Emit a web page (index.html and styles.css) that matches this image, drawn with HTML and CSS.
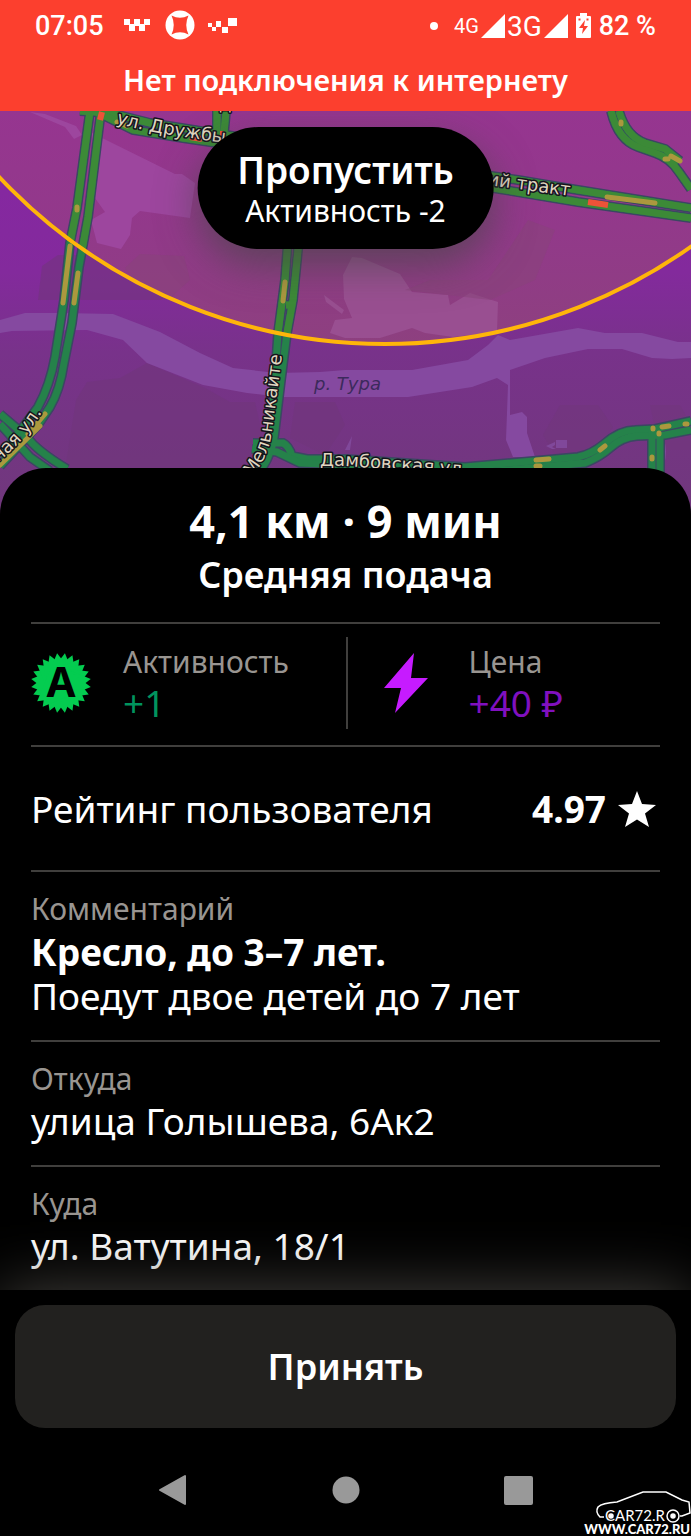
FILE: index.html
```html
<!DOCTYPE html>
<html lang="ru">
<head>
<meta charset="utf-8">
<meta name="viewport" content="width=device-width, initial-scale=1">
<title>Новый заказ</title>
<link rel="stylesheet" href="styles.css">
</head>
<body>
<header class="top">
  <div class="status">
    <span class="status-time">07:05</span>
    <svg class="status-apps" width="114" height="32" viewBox="0 0 114 32" fill="#fff" aria-hidden="true">
      <path d="M0 9h6v5h4v-5h6v5h4v-5h6v6h-5v6h-6v-5h-4v5h-6v-6h-5z"/>
      <circle cx="56" cy="15" r="14.500"/>
      <path d="M47.500 5.500q8.500 4.500 17 0-4.500 9.500 0 19-8.500-4.500-17 0 4.500-9.500 0-19z" fill="#fc3f2e"/>
      <path d="M84 13h4v4h-4zM88 17h4v4h-4zM92 11h5v6h-5zM98 17h6v6h-6zM104 8h9v8h-9z"/>
    </svg>
    <span class="status-dot"></span>
    <div class="status-net">
      <span class="net-small">4G</span>
      <svg width="24" height="24" viewBox="0 0 24 24" fill="#fff" aria-hidden="true"><path d="M0 24 24 0v24z"/></svg>
      <span class="net-large">3G</span>
      <svg width="24" height="24" viewBox="0 0 24 24" fill="#fff" aria-hidden="true"><path d="M0 24 24 0v24z"/></svg>
    </div>
    <svg width="15" height="26" viewBox="0 0 15 26" aria-hidden="true">
      <path d="M4 0h7v3h3q1 0 1 1v20q0 1-1 1H1q-1 0-1-1V4q0-1 1-1h3z" fill="#fff"/>
      <path d="M9 7 3 15h4l-1 6 6-8H8zM2.500 5.500h2v2h-2zM10.500 5.500h2v2h-2z" fill="#fc3f2e"/>
    </svg>
    <span class="status-battery">82 %</span>
  </div>
  <p class="offline" role="alert">Нет подключения к интернету</p>
</header>

<main class="order">
  <section class="map">
    <svg class="map-canvas" viewBox="0 111 691 403" preserveAspectRatio="xMidYMin slice" role="img" aria-label="Карта">
      <defs>
        <linearGradient id="land" x1="0" y1="0" x2="0" y2="1">
          <stop offset="0" stop-color="#8726a4"/><stop offset=".4" stop-color="#832a9c"/>
          <stop offset=".6" stop-color="#78328a"/><stop offset="1" stop-color="#70387c"/>
        </linearGradient>
        <linearGradient id="zone" gradientUnits="userSpaceOnUse" x1="0" y1="111" x2="0" y2="344">
          <stop offset="0" stop-color="#963590"/><stop offset=".5" stop-color="#92398a"/><stop offset="1" stop-color="#8d407f"/>
        </linearGradient>
        <clipPath id="zone-clip"><circle cx="385" cy="-185" r="529"/></clipPath>
        <g id="lanes">
          <path d="M90 111 77 208 70 243 64 300 55 357Q50 385 38 407L20 431 0 456"/>
          <path d="M101 111 88 217 79 267 72 323 64 363Q60 390 50 407L38 425 0 466"/>
          <path d="M0 414 27 437Q36 450 67 469M0 424 30 457 50 471"/>
          <path d="M80 111 110 113 150 123 213 133 350 154 518 180 578 190 691 208"/>
          <path d="M97 112 133 130 183 138 217 143 350 165 493 188 578 202 691 218"/>
          <path d="M217 111v22M226 111l-2 22"/>
          <path d="M611 111Q618 140 638 147L655 153Q670 158 679 172L691 189"/>
          <path d="M619 111Q626 136 645 143L665 149 680 161"/>
          <path d="M288 240 285 280 278 333 272 423Q270 445 252 470"/>
          <path d="M299 240 293 300 287 333 281 380 275 430Q274 450 261 470M293 305h-7"/>
          <path d="M253 443H283Q289 446 292 456L307 459H346L465 467 578 457Q592 454 604 444 620 430 635 430L655 429 691 421"/>
          <path d="M252 449 277 452 300 463 346 465 465 474 585 463Q600 457 610 448 622 437 637 436L665 435 691 430"/>
          <path d="M652 430V474M660 434V474"/>
        </g>
      </defs>
      <rect y="111" width="691" height="403" fill="url(#land)"/>
      <g fill="#71367b" opacity=".55">
        <path d="M87 382 120 378 147 363 205 388 230 402H255L270 470H65L76 400z"/>
        <path d="M295 402 335 402 345 425 325 455 290 438zM560 405h38l15 22-20 28h-38l-12-20zM650 405h30l11 20v25h-32z"/>
        <path d="M42 266 58 255H150L190 285 160 300H38z"/>
      </g>
      <path fill="#8549a0" d="M0 320 25 313 63 313 113 314 160 332 200 353 233 368 277 373 320 372 345 370 412 370 468 360 488 345 498 335 510 340 578 328 605 333 642 333 678 342 691 342V358L672 359 652 358 622 349 588 349 545 358 510 370 510 415 522 412 527 417 527 433 535 457 513 457 506 440 508 385 497 378 472 387 408 397 283 397 247 393 203 385 147 363 123 340 87 330 12 331 0 333z"/>
      <path fill="#80489a" d="M546 446 555 442v3l-3 2 4 2h-4zM556 440h11v8h-11zM345 450l7-14-2 14zM664 440q4 10 0 26z"/>
      <circle cx="385" cy="-185" r="529" fill="url(#zone)"/>
      <g fill="#9d469e" clip-path="url(#zone-clip)">
        <path d="M92 133 175 174 182 174 195 183 190 218 140 211 132 218 130 235 121 249 97 243 91 220 105 212 95 198z"/>
        <path d="M30 112 45 114 76 126 82 135 74 139 65 127z"/>
        <g fill="#994f91">
          <path d="M343 275 352 257 362 258 400 274 412 292 448 295 450 305 470 293 498 302 497 332 453 337 425 333 412 328 380 338 345 338 330 333 335 320 352 318 344 299z"/>
          <path d="M324 295 344 310 342 314 326 302z"/>
        </g>
        <path fill="#87437a" opacity=".5" d="M125 268 140 254 184 256 190 280 168 300 140 290zM405 290l25-10h58l40-60 27 10-20 50-45 20z"/>
      </g>
      <use href="#lanes" fill="none" stroke="#3c4663" stroke-width="10"/>
      <use href="#lanes" fill="none" stroke="#25824a" stroke-width="7"/>
      <g clip-path="url(#zone-clip)"><use href="#lanes" fill="none" stroke="#3c8a37" stroke-width="7"/></g>
      <g fill="none" stroke="#ab983e" stroke-width="5" stroke-linecap="round">
        <path d="M77 207v3M70 246 63 303M78 273 74 303M285 282 283 301M45 414 28 434M40 426 0 465M117 122 127 126M607 197 655 203M621 122v2M671 156 680 161M665 159h3M536 460 549 459M536 466h4M600 450 605 446M662 427 669 426M685 424h2M653 429v-1M659 433v1M652 457v2"/>
      </g>
      <path d="M102 112 100 120M190 137 202 139M588 202 608 205M220 134h4" fill="none" stroke="#ee5238" stroke-width="6"/>
      <circle cx="385" cy="-185" r="529" fill="none" stroke="#ffb50a" stroke-width="4"/>
      <defs>
        <path id="p-druzhby" d="M116 123Q150 134 250 146"/>
        <path id="p-trakt" d="M487 185 600 200"/>
        <path id="p-melnikayte" d="M252 477Q269 456 272 432L284 340"/>
        <path id="p-left" d="M-10 468Q36 436 60 376"/>
        <path id="p-dambovskaya" d="M320 466 345 466Q400 470 500 478"/>
      </defs>
      <g class="street">
        <text><textPath href="#p-druzhby">ул. Дружбы</textPath></text>
        <text><textPath href="#p-trakt">ий тракт</textPath></text>
        <text><textPath href="#p-melnikayte">Мельникайте</textPath></text>
        <text><textPath href="#p-left">зная ул.</textPath></text>
        <text><textPath href="#p-dambovskaya">Дамбовская ул.</textPath></text>
        <text x="219" y="110">д</text>
      </g>
      <text class="river" x="314" y="390">р. Тура</text>
    </svg>
    <button class="skip" type="button">
      <span class="skip-title">Пропустить</span>
      <span class="skip-note">Активность -2</span>
    </button>
  </section>

  <section class="sheet">
    <div class="summary">
      <h1 class="summary-title">4,1 км · 9 мин</h1>
      <p class="summary-sub">Средняя подача</p>
    </div>
    <div class="bonuses">
      <div class="bonus">
        <svg width="60" height="60" viewBox="0 0 60 60" aria-hidden="true">
          <g fill="#04cc50" transform="rotate(7.5 30 30)">
            <path id="spikes" d="M30 0 55.980 45H4.020z"/>
            <use href="#spikes" transform="rotate(15 30 30)"/>
            <use href="#spikes" transform="rotate(30 30 30)"/>
            <use href="#spikes" transform="rotate(45 30 30)"/>
            <use href="#spikes" transform="rotate(60 30 30)"/>
            <use href="#spikes" transform="rotate(75 30 30)"/>
            <use href="#spikes" transform="rotate(90 30 30)"/>
            <use href="#spikes" transform="rotate(105 30 30)"/>
          </g>
          <text class="badge-letter" x="30" y="44">A</text>
        </svg>
        <div>
          <p class="label">Активность</p>
          <p class="value value-green">+1</p>
        </div>
      </div>
      <div class="bonus bonus-price">
        <svg width="60" height="60" viewBox="0 0 60 60" aria-hidden="true"><path d="M37 0 7 35h17l-6 25 33-35H34z" fill="#c61bff"/></svg>
        <div>
          <p class="label">Цена</p>
          <p class="value value-violet">+40 ₽</p>
        </div>
      </div>
    </div>
    <div class="rating">
      <p class="value">Рейтинг пользователя</p>
      <p class="rating-score">4.97
        <svg width="38" height="36" viewBox="0 0 38 36" fill="#fff" aria-hidden="true"><path d="M19 0 24 13 38 14 27 22.500 31 36 19 28.500 7 36 11 22.500 0 14 14 13z"/></svg>
      </p>
    </div>
    <div class="field">
      <p class="label">Комментарий</p>
      <p class="value value-bold">Кресло, до 3–7 лет.</p>
      <p class="value">Поедут двое детей до 7 лет</p>
    </div>
    <div class="field">
      <p class="label">Откуда</p>
      <p class="value">улица Голышева, 6Ак2</p>
    </div>
    <div class="field">
      <p class="label">Куда</p>
      <p class="value">ул. Ватутина, 18/1</p>
    </div>
  </section>
</main>

<footer class="footer">
  <button class="accept" type="button">Принять</button>
  <nav class="system-nav">
    <button type="button" aria-label="Назад"><svg width="30" height="32" viewBox="0 0 30 32" fill="#999" stroke="#999" stroke-width="2" stroke-linejoin="round"><path d="M2 16 27 2v28z"/></svg></button>
    <button type="button" aria-label="Домой"><svg width="28" height="28" viewBox="0 0 28 28" fill="#999"><circle cx="14" cy="14" r="13.500"/></svg></button>
    <button type="button" aria-label="Недавние"><svg width="29" height="29" viewBox="0 0 29 29" fill="#999"><rect width="29" height="29" rx="2"/></svg></button>
  </nav>
  <a class="watermark" href="#">
    <svg width="112" height="46" viewBox="0 0 112 46" fill="none" stroke="#fff" stroke-width="1.500" role="img" aria-label="CAR72.RU">
      <path d="M25 27H21Q16 22 19 17 23 13 38 12L64 2H87L103 10 110 12 111 23 103 26H101"/>
      <text class="mark-thin" x="26" y="31">CAR72.R</text>
      <circle cx="94" cy="26" r="6"/>
      <circle cx="32" cy="26" r="2" fill="#fff"/><circle cx="94" cy="26" r="2" fill="#fff"/>
      <text class="mark-bold" x="111" y="44">WWW.CAR72.RU</text>
    </svg>
  </a>
</footer>
</body>
</html>
```

FILE: styles.css
```css
* { box-sizing: border-box; }

body {
  margin: 0;
  min-height: 100vh;
  display: flex;
  flex-direction: column;
  background: #000;
  color: #fff;
  font-family: "Noto Sans", "Open Sans", sans-serif;
}

p, h1 { margin: 0; }

button {
  border: 0;
  padding: 0;
  background: none;
  color: inherit;
  font: inherit;
  cursor: pointer;
}

svg { display: block; flex: none; }

/* Status bar and connection banner */
.top {
  background: #fc3f2e;
  padding: 10px 35px 11px;
}

.status {
  display: flex;
  align-items: center;
  height: 32px;
  font-family: Roboto, sans-serif;
  font-size: 27px;
  font-weight: 500;
}

.status-apps { margin-left: 20px; }

.status-dot {
  width: 8px;
  height: 8px;
  margin-left: auto;
  margin-right: 16px;
  border-radius: 50%;
  background: #fff;
}

.status-net {
  display: flex;
  align-items: center;
  gap: 2px;
  margin-right: 8px;
  font-weight: 400;
}

.net-small { font-size: 20px; }
.net-large { font-size: 28px; }
.status-battery { margin-left: 8px; }

.offline {
  margin-top: 18px;
  line-height: 40px;
  font-size: 29px;
  font-weight: 600;
  text-align: center;
}

/* Map */
.order {
  flex: 1;
  display: flex;
  flex-direction: column;
}

.map {
  position: relative;
  flex: 1;
  min-height: 403px;
  overflow: hidden;
}

.map-canvas {
  position: absolute;
  inset: 0;
  width: 100%;
  height: 100%;
}

.street {
  font: 18px "DejaVu Sans", sans-serif;
  fill: #e0d6c0;
  stroke: #14141c;
  stroke-width: 3px;
  stroke-linejoin: round;
  paint-order: stroke;
}

.river {
  font: italic 18px "DejaVu Sans", sans-serif;
  fill: #3c2a5c;
}

.skip {
  position: absolute;
  top: 16px;
  left: 50%;
  transform: translateX(-50%);
  display: flex;
  flex-direction: column;
  align-items: center;
  padding: 22px 40px 18px;
  border-radius: 61px;
  background: #000;
  box-shadow: 0 16px 40px rgba(70, 70, 70, 0.7);
  white-space: nowrap;
}

.skip-title { font-size: 37px; font-weight: 600; line-height: 42px; }
.skip-note { font-size: 30px; line-height: 40px; }

/* Order sheet */
.sheet {
  position: relative;
  margin-top: -46px;
  padding: 0 31px;
  border-radius: 46px 46px 0 0;
  background: #000;
}

.summary {
  padding: 26px 0 20px;
  text-align: center;
}

.summary-title { font-size: 45px; font-weight: 700; line-height: 54px; }
.summary-sub { font-size: 36px; font-weight: 600; line-height: 54px; }

.bonuses {
  display: grid;
  grid-template-columns: 1fr 1fr;
  padding: 13px 0 16px;
  border-top: 2px solid #403f3d;
}

.bonus {
  display: flex;
  align-items: center;
  gap: 32px;
  height: 92px;
}

.bonus .value { line-height: 42px; }

.bonus-price {
  padding-left: 29px;
  border-left: 2px solid #403f3d;
}

.label {
  color: #999591;
  font-size: 30px;
  line-height: 40px;
}

.value { font-size: 37px; line-height: 44px; }
.value-bold { font-weight: 700; line-height: 45px; }
.value-green { color: #00945e; }
.value-violet { color: #8010bf; }

.rating {
  display: flex;
  align-items: center;
  justify-content: space-between;
  height: 125px;
  padding-right: 4px;
  border-top: 2px solid #403f3d;
}

.rating-score {
  display: flex;
  align-items: center;
  gap: 12px;
  font-size: 37px;
  font-weight: 700;
}

.field {
  padding: 17px 0 22px;
  border-top: 2px solid #403f3d;
}

/* Bottom controls */
.footer {
  position: relative;
  padding: 15px 15px 0;
  background: #000;
  box-shadow: 0 0 60px #45433f;
}

.accept {
  width: 100%;
  height: 123px;
  border-radius: 30px;
  background: #22211f;
  font-size: 36px;
  font-weight: 600;
}

.system-nav {
  display: grid;
  grid-template-columns: repeat(3, 1fr);
  height: 108px;
  padding: 46px 71px 0;
}

.system-nav button {
  display: grid;
  place-items: center;
  height: 32px;
}

.watermark {
  position: absolute;
  right: 0;
  bottom: 0;
}

.mark-thin { font: 15px Lato, sans-serif; fill: #fff; stroke: none; }
.mark-bold { font: 900 13px Lato, sans-serif; fill: #fff; stroke: none; text-anchor: end; }
.badge-letter { font: 700 42px "Noto Sans", sans-serif; fill: #000; text-anchor: middle; }
```
